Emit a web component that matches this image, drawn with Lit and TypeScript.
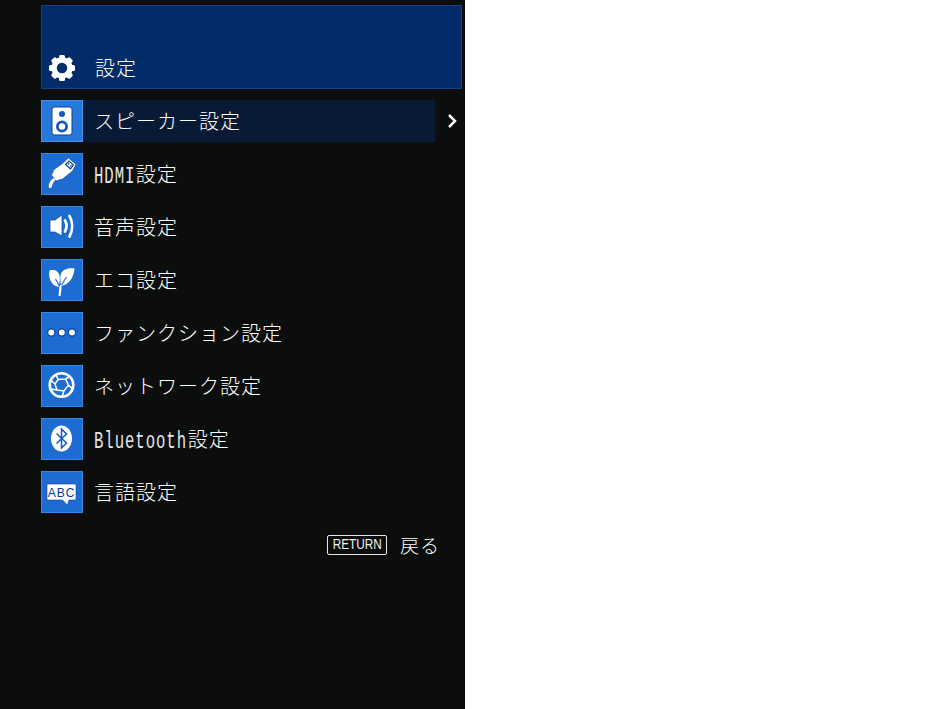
import { LitElement, html, css, svg } from "lit";
import { customElement } from "lit/decorators.js";

const B = "#0b3f9a";
const N = "#0a3a94";
const gear = svg`<g fill="#fff">${[0, 45, 90, 135, 180, 225, 270, 315].map(
  (a) => svg`<rect x="10" y="0" width="6" height="6" rx="1.5" transform="rotate(${a} 13 13)"/>`
)}<circle cx="13" cy="13" r="8" fill="none" stroke="#fff" stroke-width="5.500"/></g>`;

const icons: Record<string, unknown> = {
  speaker: svg`<rect x="11" y="7" width="20" height="28" rx="2.500" fill="#fff" stroke="${B}"/>
    <circle cx="21" cy="14" r="3" fill="#1257c8"/><circle cx="21" cy="26.500" r="4.600" fill="#fff" stroke="#1257c8" stroke-width="2.800"/>`,
  hdmi: svg`<path d="M21.500 10.500L27.500 5l7.500 6.500-3.500 6.500-10 8-6.500 2-4.500-6 2.500-5.500z" fill="#fff" stroke="${B}" stroke-width=".6"/>
    <path d="M12.500 27c-1.500 1-2.800 3-3.300 6.500" fill="none" stroke="#fff" stroke-width="3.200" stroke-linecap="round"/>
    <path d="M24.500 11.500l3.500-3.500 4.500 4-3 3.800z" fill="none" stroke="${B}" stroke-width="1.200"/>
    <path d="M27 11.500l1.200-1.200M29.300 13.500l1.200-1.200" stroke="${B}" stroke-width="1.200"/>`,
  sound: svg`<path d="M9 14h5l7-5v21l-7-4H9z" fill="#fff" stroke="${B}" stroke-width=".7"/>
    <path d="M24 14.500c2 3.500 2 7.500 0 11M28.500 10c3.500 6 3.500 14 0 20.500" fill="none" stroke="#fff" stroke-width="2.700" stroke-linecap="round"/>`,
  leaf: svg`<path d="M8.500 11.500c5-1.500 9 .5 10 5 .7 3.500 0 8-1 11.500C11 27 7 20 8.500 11.500z" fill="#fff"/>
    <path d="M33.500 9.500c-7-1-13 1.500-14 7-.5 3.500 0 7 .7 10.500C27 26 33 19 33.500 9.500z" fill="#fff"/>
    <path d="M19.500 26c0 4-.5 7-1 11" stroke="#fff" stroke-width="2.200" fill="none"/>
    <path d="M18.500 27l-4-7M20.500 26l5-8" stroke="#1e6fd6" stroke-width="1.200" fill="none"/>`,
  dots: svg`<g fill="#fff" stroke="${B}" stroke-width="1.200"><circle cx="10.300" cy="20.500" r="3.600"/><circle cx="20.800" cy="20.500" r="3.600"/><circle cx="31" cy="20.500" r="3.600"/></g>`,
  net: svg`<g fill="none" stroke="#fff"><circle cx="20.500" cy="20" r="11.800" stroke-width="2.600"/>
    <path d="M17 14.500l7.500-.5 3 6-4.500 6-7-1-2-6zM17 14.500l-2-5M24.500 14l5-3M27.500 20l4 4M23 26l-2 5.500M16 25l-6-1M14 19l-4.500-4" stroke-width="1.500"/></g>`,
  bt: svg`<ellipse cx="20.500" cy="20.500" rx="10.500" ry="13" fill="#fff"/>
    <path d="M15.500 15.500l10 9.500-5 5V11l5 5-10 9.500" fill="none" stroke="#1257c8" stroke-width="1.500"/>`,
  abc: svg`<path d="M7 13h27a1 1 0 0 1 1 1v14a1 1 0 0 1-1 1h-6l-1.500 5-5-5H7a1 1 0 0 1-1-1V14a1 1 0 0 1 1-1z" fill="#fff" stroke="${B}" stroke-width=".6"/>
    <text x="20.500" y="25.500" text-anchor="middle" font-family="Liberation Sans, sans-serif" font-size="12" letter-spacing="1" fill="${N}">ABC</text>`,
};

const rows: { icon: string; label: unknown; sel?: boolean }[] = [
  { icon: "speaker", label: "スピーカー設定", sel: true },
  { icon: "hdmi", label: html`<span class="latin hdmi">HDMI</span>設定` },
  { icon: "sound", label: "音声設定" },
  { icon: "leaf", label: "エコ設定" },
  { icon: "dots", label: "ファンクション設定" },
  { icon: "net", label: "ネットワーク設定" },
  { icon: "bt", label: html`<span class="latin blue">Bluetooth</span>設定` },
  { icon: "abc", label: "言語設定" },
];

@customElement("app-root")
export class AppRoot extends LitElement {
  static styles = css`
    :host {
      display: block;
      width: 945px;
      height: 709px;
      background: #fff;
      font-family: "Noto Sans CJK JP", "Liberation Sans", sans-serif;
      color: #fff;
    }
    .panel {
      box-sizing: border-box;
      width: 465px;
      height: 709px;
      background: #0c0e0e;
      padding: 5px 3px 0 41px;
      display: flex;
      flex-direction: column;
    }
    .header {
      box-sizing: border-box;
      height: 84px;
      background: #022c69;
      border: 1px solid #0a448f;
      display: flex;
      align-items: flex-end;
      gap: 20px;
      padding: 0 0 7px 7px;
      margin-bottom: 11px;
    }
    .header svg {
      width: 26px;
      height: 26px;
      flex: none;
    }
    .title,
    .label {
      font-size: 20px;
      font-weight: 300;
      line-height: 26px;
      letter-spacing: 1px;
      white-space: nowrap;
    }
    .list {
      display: flex;
      flex-direction: column;
      gap: 11px;
    }
    .row {
      display: flex;
      align-items: center;
      height: 42px;
    }
    .bar {
      width: 394px;
      height: 42px;
      display: flex;
      align-items: center;
      gap: 11px;
    }
    .row.sel .bar {
      background: #081a36;
    }
    .icon {
      box-sizing: border-box;
      width: 42px;
      height: 42px;
      flex: none;
      background: #1e6cd2;
      border: 1px solid #3188e6;
    }
    .row.sel .icon {
      background: #2878dc;
      border-color: #3d95ee;
    }
    .icon svg {
      display: block;
      width: 42px;
      height: 42px;
      margin: -1px;
    }
    .chev {
      width: 12px;
      height: 16px;
      margin-left: 11px;
    }
    .latin {
      display: inline-block;
      font-family: "Liberation Mono", monospace;
      font-size: 23px;
      font-weight: 400;
      line-height: 20px;
      vertical-align: -1px;
      transform: scaleX(0.68);
      transform-origin: left center;
      letter-spacing: 1.4px;
      color: #e6e6e6;
    }
    .hdmi {
      margin-right: -19px;
    }
    .blue {
      margin-right: -43px;
    }
    .back {
      display: flex;
      justify-content: flex-end;
      align-items: center;
      gap: 13px;
      padding: 0 22px 0 0;
      margin-top: 11px;
      height: 42px;
    }
    .key {
      box-sizing: border-box;
      width: 60px;
      height: 20px;
      border: 1.5px solid #e8e8e8;
      border-radius: 2px;
      font-family: "Liberation Sans", sans-serif;
      font-size: 14px;
      line-height: 17px;
      display: flex;
      justify-content: center;
      color: #f0f0f0;
    }
    .key span {
      display: inline-block;
      transform: scaleX(0.84);
    }
    .back-label {
      font-size: 19px;
      font-weight: 300;
      letter-spacing: 1px;
      line-height: 26px;
    }
  `;

  render() {
    return html`<div class="panel">
      <div class="header">
        <svg viewBox="0 0 26 26">${gear}</svg>
        <span class="title">設定</span>
      </div>
      <div class="list">
        ${rows.map(
          (r) => html`<div class="row ${r.sel ? "sel" : ""}">
            <div class="bar">
              <div class="icon"><svg viewBox="0 0 42 42">${icons[r.icon]}</svg></div>
              <span class="label">${r.label}</span>
            </div>
            ${r.sel
              ? html`<svg class="chev" viewBox="0 0 12 16"><path d="M3 2l6 6-6 6" fill="none" stroke="#fff" stroke-width="2.500"/></svg>`
              : ""}
          </div>`
        )}
      </div>
      <div class="back">
        <span class="key"><span>RETURN</span></span>
        <span class="back-label">戻る</span>
      </div>
    </div>`;
  }
}
